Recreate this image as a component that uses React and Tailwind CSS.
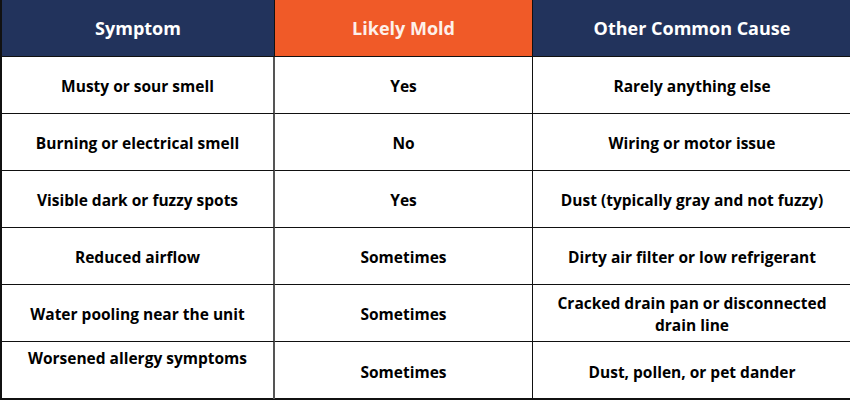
import React from "react";

const rows = [
  ["Musty or sour smell", "Yes", "Rarely anything else"],
  ["Burning or electrical smell", "No", "Wiring or motor issue"],
  ["Visible dark or fuzzy spots", "Yes", "Dust (typically gray and not fuzzy)"],
  ["Reduced airflow", "Sometimes", "Dirty air filter or low refrigerant"],
  ["Water pooling near the unit", "Sometimes", "Cracked drain pan or disconnected drain line"],
  ["Worsened allergy symptoms", "Sometimes", "Dust, pollen, or pet dander"],
];

export default function App() {
  return (
    <div className="w-[850px] h-[400px] bg-white" style={{ fontFamily: '"Open Sans", sans-serif' }}>
      <div className="grid grid-cols-[273px_258px_319px] grid-rows-[57px_repeat(6,57px)] w-[850px] h-[400px] border-l-2 border-b-2 border-[#111] text-black font-bold">
        <div className="bg-[#22335c] text-white text-[18px] flex items-center justify-center border-r border-[#111] border-b-[1.5px]">Symptom</div>
        <div className="bg-[#f05a28] text-[#fdf0ea] text-[18px] flex items-center justify-center border-r border-[#111] border-b-[1.5px]">Likely Mold</div>
        <div className="bg-[#22335c] text-white text-[18px] flex items-center justify-center border-b-[1.5px] border-r-[1.5px] border-[#111]">Other Common Cause</div>
        {rows.map((r, i) => (
          <React.Fragment key={i}>
            <div className={`text-[15.5px] leading-[22px] flex justify-center text-center px-3 border-r-2 border-[#555] ${i < 5 ? "border-b-[1.5px] border-b-[#111] items-center pt-[2px]" : "items-start pt-[5px]"}`}>{r[0]}</div>
            <div className={`text-[15.5px] leading-[22px] flex items-center justify-center text-center px-3 pt-[2px] border-r-[1.5px] border-[#111] ${i < 5 ? "border-b-[1.5px]" : ""}`}>{r[1]}</div>
            <div className={`text-[15.5px] leading-[22px] flex items-center justify-center text-center px-6 pt-[2px] border-r-[1.5px] border-[#111] ${i < 5 ? "border-b-[1.5px]" : ""}`}>{r[2]}</div>
          </React.Fragment>
        ))}
      </div>
    </div>
  );
}
